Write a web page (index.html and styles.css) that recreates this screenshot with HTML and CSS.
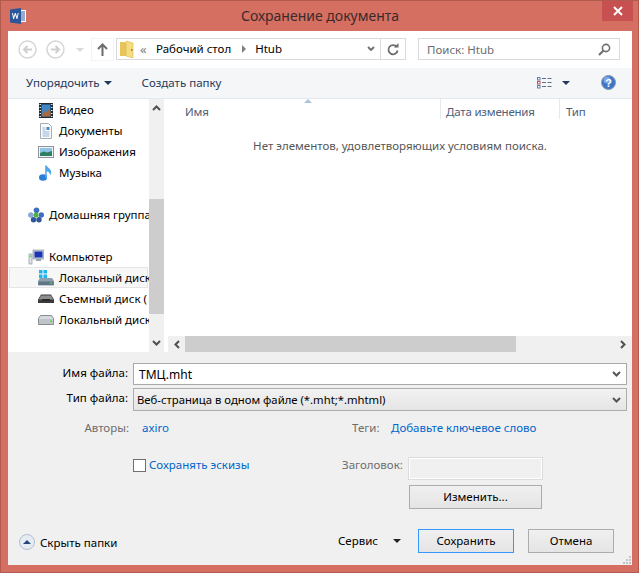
FILE: index.html
```html
<!DOCTYPE html>
<html lang="ru">
<head>
    <meta charset="UTF-8">
    <title>Сохранение документа</title>
    <link rel="stylesheet" href="styles.css">
</head>
<body>
    <div class="window">
        <div class="titlebar">
            <svg class="app-icon" width="16" height="16" viewBox="0 0 16 16">
                <rect x="6" y="2" width="10" height="12" fill="#fff"/>
                <path d="M10 4h5M10 6h5M10 8h5M10 10h5M10 12h5" stroke="#2b579a"/>
                <path d="M0 1.500L11 0v16L0 14.500z" fill="#2b579a"/>
                <path d="M2 5l1.200 6h.8l1.300-4 1.300 4h.8L8.700 5h-1l-.7 3.800L5.700 5h-.8L3.700 8.800 3 5z" fill="#fff"/>
            </svg>
            <div class="title">Сохранение документа</div>
            <div class="close-btn">
                <svg width="10" height="10" viewBox="0 0 10 10"><path d="M1 1l8 8M9 1l-8 8" stroke="#fff" stroke-width="2"/></svg>
            </div>
        </div>

        <div class="client">
            <div class="navbar">
                <div class="round-btn">
                    <svg width="19" height="19" viewBox="0 0 19 19"><circle cx="9.500" cy="9.500" r="8.500" fill="#fff" stroke="#d4d4d4" stroke-width="1.400"/><path d="M14 9.500H6M9.500 6l-3.500 3.500 3.500 3.500" fill="none" stroke="#cfcfcf" stroke-width="2"/></svg>
                </div>
                <div class="round-btn">
                    <svg width="19" height="19" viewBox="0 0 19 19"><circle cx="9.500" cy="9.500" r="8.500" fill="#fff" stroke="#d4d4d4" stroke-width="1.400"/><path d="M5 9.500h8M9.500 6l3.500 3.500L9.500 13" fill="none" stroke="#cfcfcf" stroke-width="2"/></svg>
                </div>
                <span class="tri-down tri-light"></span>
                <div class="up-btn">
                    <svg width="11" height="13" viewBox="0 0 11 13"><path d="M5.500 13V2M1 6l4.500-4.500L10 6" fill="none" stroke="#6d6d6d" stroke-width="2"/></svg>
                </div>
                <div class="address">
                    <svg class="folder" width="14" height="18" viewBox="0 0 14 18">
                        <path d="M0 2h5l1 1v13H0z" fill="#e8c45a"/>
                        <path d="M6 1l7 2v15l-7-2z" fill="#f6dc80" stroke="#d9b64e" stroke-width=".6"/>
                        <rect x="11" y="9" width="1.500" height="2" fill="#9a8a40"/>
                    </svg>
                    <span class="crumb-more">«</span>
                    <span class="crumb">Рабочий стол</span>
                    <span class="tri-right"></span>
                    <span class="crumb">Htub</span>
                    <svg class="addr-chevron" width="8" height="6" viewBox="0 0 8 6"><path d="M1 1l3 3 3-3" fill="none" stroke="#6d6d6d" stroke-width="1.800"/></svg>
                    <div class="refresh">
                        <svg width="12" height="13" viewBox="0 0 12 13"><path d="M9.800 4A4.600 4.600 0 1 0 10.600 7.500" fill="none" stroke="#6d6d6d" stroke-width="1.800"/><path d="M7 4.500h4.500V0z" fill="#6d6d6d"/></svg>
                    </div>
                </div>
                <div class="search">
                    <span>Поиск: Htub</span>
                    <svg width="13" height="13" viewBox="0 0 13 13"><circle cx="8" cy="5" r="3.600" fill="none" stroke="#707070" stroke-width="1.600"/><path d="M5.500 7.500L1 12" stroke="#707070" stroke-width="2.200"/></svg>
                </div>
            </div>

            <div class="commandbar">
                <span class="cmd">Упорядочить</span>
                <span class="tri-down tri-dark cmd-arrow"></span>
                <span class="cmd cmd-new">Создать папку</span>
                <svg class="view-icon" width="15" height="12" viewBox="0 0 15 12">
                    <rect x=".5" y=".5" width="2.500" height="2.500" fill="#fff" stroke="#5a82b0"/>
                    <rect x=".5" y="4.500" width="2.500" height="2.500" fill="#fff" stroke="#c05050"/>
                    <rect x=".5" y="8.500" width="2.500" height="2.500" fill="#fff" stroke="#5a82b0"/>
                    <path d="M5 1.500h4M10.500 1.500h4M5 5.500h4M10.500 5.500h4M5 9.500h4M10.500 9.500h4" stroke="#5d6f88"/>
                </svg>
                <span class="tri-down tri-dark view-arrow"></span>
                <svg class="help-icon" width="15" height="15" viewBox="0 0 15 15">
                    <circle cx="7.500" cy="7.500" r="7" fill="#3f76c8" stroke="#8a99ad"/>
                    <circle cx="6" cy="5" r="3.500" fill="#7aa6e6"/>
                    <text x="7.500" y="11.500" class="help-mark">?</text>
                </svg>
            </div>

            <div class="browser">
                <div class="tree-pane">
                    <div class="tree">
                        <div class="tree-row sub">
                            <svg width="16" height="16" viewBox="0 0 16 16"><rect x="1" y="1" width="14" height="15" fill="#1d2a33"/><rect x="3.500" y="2.500" width="9" height="12" fill="#3f86c6"/><path d="M3.500 14.500l3-6 2.500 2 1.500-3 2 2v5z" fill="#a8683a"/><path d="M1.500 2.500h1.500M1.500 5.500h1.500M1.500 8.500h1.500M1.500 11.500h1.500M1.500 14.500h1.500M13 2.500h1.500M13 5.500h1.500M13 8.500h1.500M13 11.500h1.500M13 14.500h1.500" stroke="#e6eef2"/></svg>
                            <span>Видео</span>
                        </div>
                        <div class="tree-row sub">
                            <svg width="16" height="16" viewBox="0 0 16 16"><path d="M2.500 .5h8l3 3v12h-11z" fill="#fcfcfc" stroke="#a5acb5"/><path d="M4.500 5h3M4.500 7h3M4.500 9h7M4.500 11h7M4.500 13h7" stroke="#8fb0d8"/><rect x="8.500" y="4" width="3" height="3" fill="#4f87c4"/></svg>
                            <span>Документы</span>
                        </div>
                        <div class="tree-row sub">
                            <svg width="16" height="16" viewBox="0 0 16 16"><rect x=".5" y="2.500" width="15" height="11" fill="#f4f4f4" stroke="#8b949c"/><rect x="2" y="4" width="12" height="8" fill="#8ec4e4"/><path d="M2 9l4-1.500 3 1 5-1.500v5H2z" fill="#2f7f62"/></svg>
                            <span>Изображения</span>
                        </div>
                        <div class="tree-row sub">
                            <svg width="16" height="16" viewBox="0 0 16 16"><ellipse cx="5" cy="12.500" rx="4" ry="3.200" fill="#2a7fd8"/><path d="M7.200 13V.5h1.500c.5 2.500 5 3 4.500 7.500-.1.900-.5 1.800-1 2.300.2-2-1.500-3.600-3.500-4V13z" fill="#52a6ea"/></svg>
                            <span>Музыка</span>
                        </div>
                        <div class="tree-gap"></div>
                        <div class="tree-row">
                            <svg width="16" height="16" viewBox="0 0 16 16"><circle cx="8.500" cy="3.200" r="2.800" fill="#3d6fc0"/><circle cx="2.800" cy="8" r="2.700" fill="#8aa6d4"/><circle cx="13.300" cy="8" r="2.700" fill="#3d6fc0"/><circle cx="5.500" cy="12.800" r="2.700" fill="#2f559c"/><circle cx="11" cy="12.800" r="2.700" fill="#2f559c"/><circle cx="8" cy="8" r="2.500" fill="#4fae3c"/></svg>
                            <span>Домашняя группа</span>
                        </div>
                        <div class="tree-gap"></div>
                        <div class="tree-row">
                            <svg width="16" height="16" viewBox="0 0 16 16"><rect x="5" y="1" width="11" height="9" fill="#c4ccd4" stroke="#7c8894" stroke-width=".6"/><rect x="6.500" y="2.500" width="8" height="6" fill="#1a34b8"/><rect x="8" y="10" width="5" height="2" fill="#9aa4ae"/><rect x="1" y="5" width="3" height="10" fill="#dfe3e6" stroke="#7c8894" stroke-width=".6"/><rect x="1.800" y="6.500" width="1.400" height="1.500" fill="#5bc25b"/></svg>
                            <span>Компьютер</span>
                        </div>
                        <div class="tree-row sub selected">
                            <svg width="16" height="16" viewBox="0 0 16 16"><path d="M1 0h3.500v3.500H1zM5.500 0H9v3.500H5.500zM1 4.500h3.500V8H1zM5.500 4.500H9V8H5.500z" fill="#1eb4ee"/><path d="M2 8h12l2 3v4.500H0V11z" fill="#8da0ad"/><rect x=".5" y="11.500" width="15" height="3.500" fill="#5f7585"/><rect x="12" y="12.500" width="2" height="1.300" fill="#63d05c"/></svg>
                            <span>Локальный диск</span>
                        </div>
                        <div class="tree-row sub">
                            <svg width="16" height="16" viewBox="0 0 16 16"><path d="M3 3.500h10l3 5v3.500H0V8.500z" fill="#3b3b3b"/><path d="M1 8.500h14v-.5l-2-3.500H3L1 8z" fill="#8d8d8d"/><rect x="4" y="8" width="8" height="2" fill="#2a2a2a"/></svg>
                            <span>Съемный диск (</span>
                        </div>
                        <div class="tree-row sub">
                            <svg width="16" height="16" viewBox="0 0 16 16"><path d="M2.500 3.500h11l2 3v6H.5v-6z" fill="#d6dadc" stroke="#6f7477" stroke-width=".8"/><rect x="1" y="7" width="14" height="5" fill="#bfc4c7"/><rect x="12" y="8.500" width="2" height="1.500" fill="#63d05c"/></svg>
                            <span>Локальный диск</span>
                        </div>
                    </div>
                    <div class="vscroll">
                        <svg class="sb-arrow" width="9" height="6" viewBox="0 0 9 6"><path d="M1 5l3.500-3.500L8 5" fill="none" stroke="#505050" stroke-width="2"/></svg>
                        <div class="vscroll-track"><div class="vscroll-thumb"></div></div>
                        <svg class="sb-arrow" width="9" height="6" viewBox="0 0 9 6"><path d="M1 1l3.500 3.500L8 1" fill="none" stroke="#505050" stroke-width="2"/></svg>
                    </div>
                </div>

                <div class="list-pane">
                    <div class="columns">
                        <div class="col col-name">Имя<span class="sort-mark"></span></div>
                        <div class="col col-date">Дата изменения</div>
                        <div class="col col-type">Тип</div>
                    </div>
                    <div class="empty">Нет элементов, удовлетворяющих условиям поиска.</div>
                    <div class="hscroll">
                        <svg class="sb-arrow" width="6" height="9" viewBox="0 0 6 9"><path d="M5 1L1.500 4.500 5 8" fill="none" stroke="#505050" stroke-width="2"/></svg>
                        <div class="hscroll-track"><div class="hscroll-thumb"></div></div>
                        <svg class="sb-arrow" width="6" height="9" viewBox="0 0 6 9"><path d="M1 1l3.500 3.500L1 8" fill="none" stroke="#505050" stroke-width="2"/></svg>
                    </div>
                </div>
            </div>

            <div class="panel">
                <div class="file-grid">
                    <label class="file-label">Имя файла:</label>
                    <div class="field">
                        <span>ТМЦ.mht</span>
                        <svg width="9" height="6" viewBox="0 0 9 6"><path d="M1 1l3.500 3.500L8 1" fill="none" stroke="#555" stroke-width="2"/></svg>
                    </div>
                    <label class="file-label">Тип файла:</label>
                    <div class="field field-select">
                        <span>Веб-страница в одном файле (*.mht;*.mhtml)</span>
                        <svg width="9" height="6" viewBox="0 0 9 6"><path d="M1 1l3.500 3.500L8 1" fill="none" stroke="#555" stroke-width="2"/></svg>
                    </div>
                </div>

                <div class="meta-row">
                    <span class="meta-label">Авторы:</span>
                    <a class="link">axiro</a>
                    <span class="meta-tags">Теги:</span>
                    <a class="link">Добавьте ключевое слово</a>
                </div>

                <div class="lower-row">
                    <div class="thumb-col">
                        <span class="checkbox"></span>
                        <a class="link">Сохранять эскизы</a>
                    </div>
                    <div class="title-col">
                        <div class="title-field">
                            <span class="title-label">Заголовок:</span>
                            <span class="title-input"></span>
                        </div>
                        <div class="btn btn-change">Изменить...</div>
                    </div>
                </div>

                <div class="footer">
                    <div class="toggle">
                        <svg width="16" height="16" viewBox="0 0 16 16"><circle cx="8" cy="8" r="7.500" fill="#e6ecf4" stroke="#b4bfcc"/><path d="M4 10l4-4 4 4z" fill="#26487c"/></svg>
                        <span>Скрыть папки</span>
                    </div>
                    <span class="tools">Сервис</span>
                    <span class="tri-down tri-black tools-arrow"></span>
                    <div class="btn btn-save">Сохранить</div>
                    <div class="btn btn-cancel">Отмена</div>
                </div>

                <svg class="grip" width="9" height="9" viewBox="0 0 9 9"><path d="M6 0h2v2H6zM3 3h2v2H3zM6 3h2v2H6zM0 6h2v2H0zM3 6h2v2H3zM6 6h2v2H6z" fill="#c4c4c4"/></svg>
            </div>
        </div>
    </div>
</body>
</html>
```

FILE: styles.css
```css
* {
    margin: 0;
    padding: 0;
    box-sizing: border-box;
}

body {
    font-family: "Noto Sans", "Open Sans", sans-serif;
    font-size: 11.5px;
    color: #000;
    background: #d46f61;
}

svg {
    display: block;
    flex-shrink: 0;
}

.window {
    width: 639px;
    height: 573px;
    padding: 0 6px 7px 7px;
    background: #d46f61;
    border: 1px solid #b25a4e;
    display: flex;
    flex-direction: column;
    overflow: hidden;
}

.titlebar {
    height: 30px;
    flex-shrink: 0;
    display: grid;
    grid-template-columns: 1fr auto 1fr;
    align-items: start;
}

.app-icon {
    margin: 7px 0 0 2px;
}

.title {
    font-size: 14px;
    line-height: 29px;
    color: #3b2a2a;
}

.close-btn {
    justify-self: end;
    width: 31px;
    height: 20px;
    margin-right: -1px;
    background: #c75050;
    display: flex;
    align-items: center;
    justify-content: center;
}

.client {
    flex: 1;
    display: flex;
    flex-direction: column;
    background: #fff;
    min-height: 0;
}

/* navigation row */
.navbar {
    height: 37px;
    flex-shrink: 0;
    display: flex;
    align-items: center;
    padding: 0 12px 1px 10px;
}

.round-btn {
    margin-right: 9px;
}

.tri-down {
    display: block;
    width: 0;
    height: 0;
    border-left: 4px solid transparent;
    border-right: 4px solid transparent;
    border-top: 4px solid #000;
    flex-shrink: 0;
}

.tri-light {
    border-top-color: #d9d9d9;
    margin: 1px 0 0 2px;
}

.tri-dark {
    border-top-color: #1e395b;
}

.tri-black {
    border-top-color: #222;
}

.tri-right {
    width: 0;
    height: 0;
    border-top: 4px solid transparent;
    border-bottom: 4px solid transparent;
    border-left: 4px solid #808080;
    margin: 0 9px 0 11px;
}

.up-btn {
    width: 23px;
    height: 23px;
    margin-left: 7px;
    border: 1px solid #f2f4f6;
    display: flex;
    align-items: center;
    justify-content: center;
}

.address {
    width: 290px;
    height: 22px;
    margin-left: 2px;
    border: 1px solid #dadada;
    display: flex;
    align-items: center;
    padding-left: 3px;
}

.folder {
    margin-right: 6px;
}

.crumb-more {
    width: 16px;
    color: #808080;
    font-size: 13px;
    line-height: 1;
}

.crumb {
    line-height: 20px;
}

.addr-chevron {
    margin-left: auto;
    margin-right: 5px;
}

.refresh {
    width: 25px;
    height: 100%;
    border-left: 1px solid #dadada;
    display: flex;
    align-items: center;
    justify-content: center;
}

.search {
    width: 202px;
    height: 22px;
    margin-left: 12px;
    border: 1px solid #dadada;
    display: flex;
    align-items: center;
    justify-content: space-between;
    padding: 0 8px;
    color: #6d6d6d;
}

/* command row */
.commandbar {
    height: 31px;
    flex-shrink: 0;
    display: flex;
    align-items: center;
    padding: 0 16px 1px 18px;
    background: #f5f6f7;
    border-bottom: 1px solid #e5e8ec;
}

.cmd {
    color: #1e395b;
}

.cmd-arrow {
    margin-left: 4px;
}

.cmd-new {
    margin-left: 30px;
}

.view-icon {
    margin-left: auto;
}

.view-arrow {
    margin-left: 10px;
}

.help-icon {
    margin-left: 31px;
}

.help-mark {
    font-family: "Liberation Sans", sans-serif;
    font-size: 11px;
    font-weight: 700;
    fill: #fff;
    text-anchor: middle;
}

/* tree and file list */
.browser {
    height: 253px;
    flex-shrink: 0;
    display: flex;
}

.tree-pane {
    width: 156px;
    flex-shrink: 0;
    display: flex;
}

.tree {
    width: 141px;
    overflow: hidden;
    flex-shrink: 0;
}

.tree-row {
    height: 21px;
    display: flex;
    align-items: center;
    gap: 5px;
    padding-left: 20px;
    white-space: nowrap;
}

.tree-row.sub {
    padding-left: 30px;
}

.tree-row.selected {
    margin-left: 1px;
    margin-right: 1px;
    padding-left: 28px;
    background: #f7f7f7;
    border: 1px solid #e5e5e5;
}

.tree-gap {
    height: 21px;
}

.vscroll {
    width: 15px;
    background: #f0f0f0;
    display: flex;
    flex-direction: column;
    align-items: center;
}

.sb-arrow {
    flex-shrink: 0;
}

.vscroll > .sb-arrow {
    margin: 6px 0;
}

.vscroll-track {
    flex: 1;
    width: 100%;
    padding-top: 82px;
}

.vscroll-thumb {
    height: 115px;
    background: #cdcdcd;
}

.list-pane {
    flex: 1;
    min-width: 0;
    display: flex;
    flex-direction: column;
    margin-left: 4px;
}

.columns {
    height: 20px;
    flex-shrink: 0;
    display: flex;
    color: #4c607a;
    letter-spacing: -0.2px;
}

.col {
    height: 100%;
    line-height: 26px;
    white-space: nowrap;
}

.col-name {
    width: 272px;
    padding-left: 17px;
    position: relative;
}

.sort-mark {
    position: absolute;
    left: 136px;
    top: 0;
    width: 0;
    height: 0;
    border-left: 4px solid transparent;
    border-right: 4px solid transparent;
    border-bottom: 4px solid #a9c4dc;
}

.col-date {
    width: 119px;
    padding-left: 5px;
    border-left: 1px solid #e5e8ec;
}

.col-type {
    flex: 1;
    padding-left: 6px;
    border-left: 1px solid #e5e8ec;
}

.empty {
    flex: 1;
    padding-top: 19px;
    text-align: center;
    color: #575757;
}

.hscroll {
    height: 16px;
    flex-shrink: 0;
    background: #f0f0f0;
    display: flex;
    align-items: center;
    padding: 0 6px;
}

.hscroll-track {
    flex: 1;
    height: 100%;
    padding: 0 104px 0 5px;
}

.hscroll-thumb {
    height: 100%;
    background: #cdcdcd;
}

/* bottom panel */
.panel {
    flex: 1;
    position: relative;
    background: #f0f0f0;
    padding-top: 11px;
}

.file-grid {
    display: grid;
    grid-template-columns: 125px 494px;
    row-gap: 3px;
}

.file-label {
    text-align: right;
    padding-right: 5px;
    line-height: 20px;
}

.field {
    height: 22px;
    display: flex;
    align-items: center;
    justify-content: space-between;
    padding: 0 5px;
    background: #fff;
    border: 1px solid #a9a9a9;
    font-size: 12px;
}

.field-select {
    height: 23px;
    padding-left: 3px;
    font-size: 11.3px;
    background: linear-gradient(#f2f2f2, #e5e5e5);
    border-color: #acacac;
}

.meta-row {
    display: grid;
    grid-template-columns: 134px 210px 39px 1fr;
    margin-top: 8px;
    line-height: 18px;
}

.meta-label {
    text-align: right;
    padding-right: 13px;
    color: #6d6d6d;
}

.meta-tags {
    color: #6d6d6d;
}

.link {
    color: #0066cc;
}

.lower-row {
    display: flex;
    margin-top: 20px;
}

.thumb-col {
    width: 334px;
    padding-left: 125px;
    display: flex;
    align-items: flex-start;
    gap: 3px;
    line-height: 16px;
}

.checkbox {
    width: 13px;
    height: 13px;
    margin-top: 2px;
    background: #fff;
    border: 1px solid #707070;
}

.title-field {
    display: flex;
    align-items: flex-start;
}

.title-label {
    width: 66px;
    line-height: 16px;
    color: #6d6d6d;
}

.title-input {
    width: 135px;
    height: 23px;
    background: #f0f0f0;
    border: 1px solid #dcdcdc;
    box-shadow: inset 0 0 0 1px #fff;
}

.btn {
    height: 24px;
    padding-bottom: 2px;
    display: flex;
    align-items: center;
    justify-content: center;
    background: linear-gradient(#f0f0f0, #e5e5e5);
    border: 1px solid #acacac;
}

.btn-change {
    width: 133px;
    margin: 5px 0 0 67px;
}

.footer {
    display: flex;
    align-items: center;
    height: 24px;
    margin-top: 20px;
    padding-left: 11px;
}

.toggle {
    display: flex;
    align-items: center;
    gap: 5px;
    padding-top: 2px;
}

.tools {
    margin-left: auto;
    padding-bottom: 2px;
}

.tools-arrow {
    margin: 0 17px 0 15px;
}

.btn-save {
    width: 96px;
    border-color: #3399ff;
}

.btn-cancel {
    width: 86px;
    margin: 0 18px 0 14px;
}

.grip {
    position: absolute;
    right: 0;
    bottom: 0;
}
```
